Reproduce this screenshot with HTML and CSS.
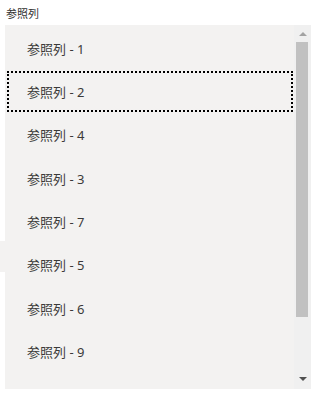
FILE: index.html
```html
<!DOCTYPE html>
<html lang="ja">
<head>
    <meta charset="UTF-8">
    <meta name="viewport" content="width=device-width, initial-scale=1.0">
    <title>参照列</title>
    <link rel="stylesheet" href="styles.css">
</head>
<body>
    <div class="field">
        <div class="field-label">参照列</div>
        <div class="listbox">
            <div class="options">
                <div class="option">参照列 - 1</div>
                <div class="option focused">参照列 - 2</div>
                <div class="option">参照列 - 4</div>
                <div class="option">参照列 - 3</div>
                <div class="option">参照列 - 7</div>
                <div class="option">参照列 - 5</div>
                <div class="option">参照列 - 6</div>
                <div class="option">参照列 - 9</div>
            </div>
            <div class="scrollbar">
                <div class="arrow arrow-up"></div>
                <div class="thumb"></div>
                <div class="track"></div>
                <div class="arrow arrow-down"></div>
            </div>
        </div>
        <div class="side-tab"></div>
    </div>
</body>
</html>
```

FILE: styles.css
```css
/* list field */
body {
    margin: 0;
    background-color: #fff;
    font-family: "Noto Sans", "Noto Sans CJK JP", sans-serif;
    color: #323130;
}

.field {
    position: relative;
    width: 323px;
    height: 396px;
}

.field-label {
    height: 25px;
    padding-left: 6px;
    font-size: 11px;
    line-height: 28px;
    box-sizing: border-box;
}

.listbox {
    display: flex;
    margin-left: 5px;
    width: 306px;
    height: 364px;
    background-color: #f3f2f1;
    overflow: hidden;
}

.options {
    flex: 1;
    padding-top: 1.6px;
    overflow: hidden;
}

.option {
    display: flex;
    align-items: center;
    height: 43.35px;
    padding-left: 22px;
    font-size: 13px;
    color: #3b3a39;
    box-sizing: border-box;
}

.option.focused {
    margin-left: 1px;
    padding-left: 21px;
    outline: 2px dotted #000;
    outline-offset: -3px;
}

.scrollbar {
    display: flex;
    flex-direction: column;
    width: 17px;
    background-color: #f0f0f0;
}

.arrow {
    height: 17px;
    display: flex;
    align-items: center;
    justify-content: center;
}

.arrow::before {
    content: "";
    width: 0;
    height: 0;
    border-left: 4px solid transparent;
    border-right: 4px solid transparent;
}

.arrow-up::before {
    border-bottom: 4px solid #a3a3a3;
}

.arrow-down::before {
    border-top: 4px solid #505050;
    margin-top: -3px;
}

.thumb {
    height: 275px;
    width: 12px;
    margin-left: 2px;
    background-color: #c1c1c1;
}

.track {
    flex: 1;
}

.side-tab {
    position: absolute;
    left: 0;
    top: 241px;
    width: 5px;
    height: 31px;
    background-color: #f3f2f1;
}
```
